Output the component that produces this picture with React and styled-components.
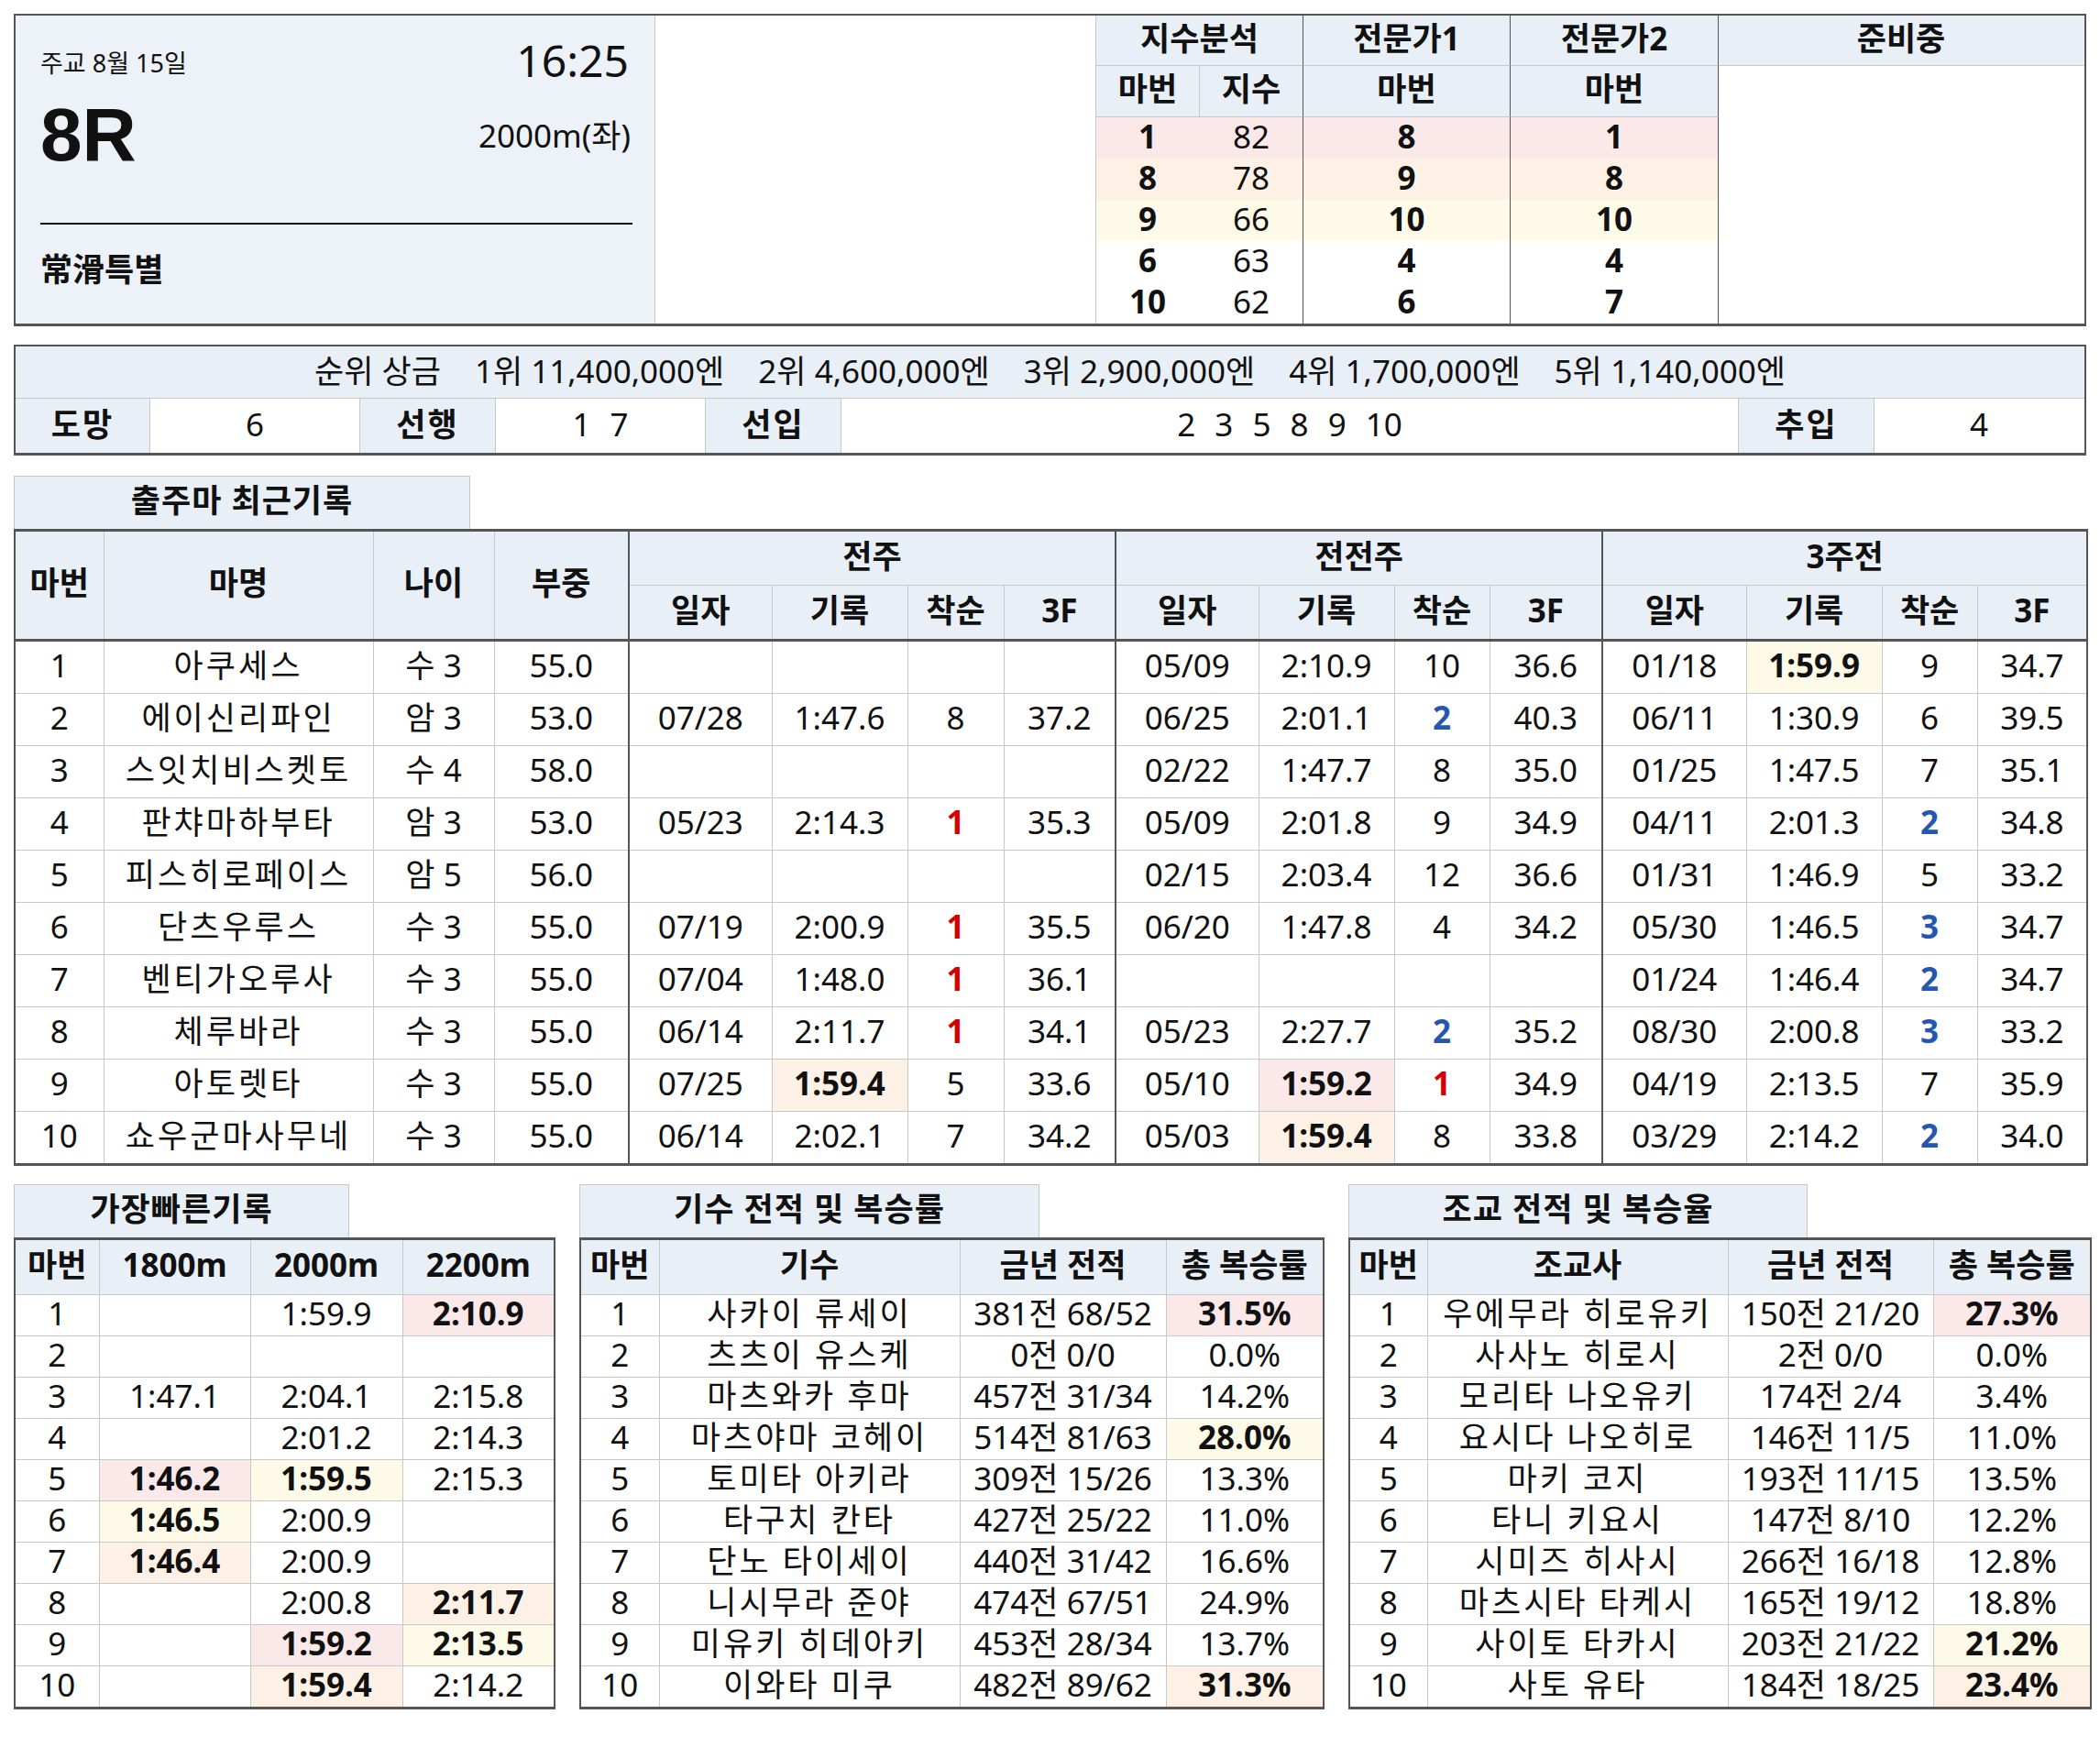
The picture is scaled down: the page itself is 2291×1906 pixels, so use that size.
import React from "react";
import styled, { createGlobalStyle } from "styled-components";

const HEAD = "#e9eff7";
const LINE = "#c8c8c8";
const DARK = "#555555";
const TONES = { 1: "#fbe8e9", 2: "#fdf1e5", 3: "#fefae8" };
const PLACE_COLORS = { 1: "#d40000", 2: "#2458b0", 3: "#2458b0" };

const GlobalStyle = createGlobalStyle`
  body {
    margin: 0;
    background: #fff;
    color: #111;
    font-family: "Noto Sans", "Noto Sans CJK KR", sans-serif;
  }
`;

const Page = styled.div`
  width: 2261px;
  padding: 15px 15px 40px;
  display: flex;
  flex-direction: column;
`;

/* ---------- top summary box ---------- */

const TopBox = styled.div`
  display: grid;
  grid-template-columns: 698px 481px 113px 113px 226px 227px 1fr;
  grid-template-rows: 55px 56px repeat(5, 45px);
  border: 2px solid ${DARK};
  border-bottom-width: 3px;
  font-size: 35px;
`;

const InfoPanel = styled.div`
  grid-column: 1;
  grid-row: 1 / -1;
  background: #edf1f8;
  border-right: 1px solid ${LINE};
  padding: 0 24px 0 27px;
  display: flex;
  flex-direction: column;
`;

const InfoRow = styled.div`
  display: flex;
  justify-content: space-between;
  align-items: center;
  height: ${(p) => p.$h}px;
  margin-top: ${(p) => p.$top}px;
`;

const DateText = styled.span`
  font-size: 27px;
  line-height: 40px;
  margin-top: 12px;
`;

const TimeText = styled.span`
  font-size: 48px;
  line-height: 50px;
  margin: 6px 4px 0 0;
`;

const RaceNo = styled.span`
  font-family: "Liberation Sans", Arial, sans-serif;
  font-size: 82px;
  font-weight: 700;
  line-height: 84px;
`;

const Distance = styled.span`
  font-size: 35px;
  line-height: 40px;
  margin: 2px 2px 0 0;
`;

const Divider = styled.div`
  height: 2px;
  background: #111;
  margin-top: 51px;
`;

const RaceName = styled.div`
  font-size: 35px;
  font-weight: 700;
  line-height: 40px;
  margin-top: 29px;
`;

const BlankArea = styled.div`
  grid-column: 2;
  grid-row: 1 / -1;
  border-right: 1px solid ${LINE};
`;

const PickHead = styled.div`
  grid-column: span ${(p) => p.$span || 1};
  background: ${HEAD};
  font-weight: 700;
  display: flex;
  align-items: center;
  justify-content: center;
  padding-bottom: 6px;
  border-bottom: 1px solid ${LINE};
  border-right: 1px solid ${(p) => (p.$last ? "transparent" : p.$soft ? LINE : DARK)};
  line-height: 1;
`;

const PendingArea = styled.div`
  grid-column: 7;
  grid-row: span 6;
`;

const PickCell = styled.div`
  background: ${(p) => TONES[p.$tone] || "#fff"};
  font-weight: ${(p) => (p.$bold ? 700 : 400)};
  display: flex;
  align-items: center;
  justify-content: center;
  padding-bottom: 5px;
  border-right: 1px solid ${(p) => (p.$edge ? DARK : "transparent")};
  line-height: 1;
`;

/* ---------- prize / style box ---------- */

const PrizeBox = styled.div`
  margin-top: 20px;
  border: 2px solid ${DARK};
  border-bottom-width: 3px;
  font-size: 35px;
`;

const PrizeLine = styled.div`
  height: 57px;
  box-sizing: border-box;
  padding-bottom: 4px;
  background: ${HEAD};
  border-bottom: 1px solid ${LINE};
  display: flex;
  align-items: center;
  justify-content: center;
  gap: 37px;
  line-height: 1;
`;

const StyleRow = styled.div`
  display: grid;
  grid-template-columns: 147px 229px 148px 229px 148px 1fr 148px 229px;
  height: 59px;
`;

const StyleCell = styled.div`
  display: flex;
  align-items: center;
  justify-content: center;
  padding-bottom: 4px;
  background: ${(p) => (p.$label ? HEAD : "#fff")};
  font-weight: ${(p) => (p.$label ? 700 : 400)};
  letter-spacing: ${(p) => (p.$label ? "2px" : "0")};
  border-right: 1px solid ${(p) => (p.$last ? "transparent" : LINE)};
  word-spacing: 12px;
  line-height: 1;
`;

/* ---------- shared section tab ---------- */

const SectionTab = styled.div`
  width: ${(p) => p.$w}px;
  height: 58px;
  box-sizing: border-box;
  padding-bottom: 6px;
  background: ${HEAD};
  border: 1px solid ${LINE};
  border-bottom: none;
  display: flex;
  align-items: center;
  justify-content: center;
  font-size: 35px;
  font-weight: 700;
  letter-spacing: 1px;
  line-height: 1;
`;

const RecordSection = styled.section`
  margin-top: 22px;
  display: flex;
  flex-direction: column;
`;

/* ---------- tables ---------- */

const Table = styled.table`
  width: ${(p) => p.$w}px;
  table-layout: fixed;
  border-collapse: collapse;
  border-top: 3px solid ${DARK};
  border-bottom: 3px solid ${DARK};
  border-left: 2px solid ${DARK};
  border-right: 2px solid ${DARK};
  font-size: 35px;
`;

const Th = styled.th`
  height: ${(p) => p.$h || 52}px;
  padding: 0 0 6px;
  background: ${HEAD};
  font-weight: 700;
  line-height: 1;
  white-space: nowrap;
  border: 1px solid ${LINE};
  border-left: ${(p) => (p.$sep ? `2px solid ${DARK}` : `1px solid ${LINE}`)};
  border-bottom: ${(p) => (p.$base ? `3px solid ${DARK}` : `1px solid ${LINE}`)};
`;

const Td = styled.td`
  height: ${(p) => p.$h || 51}px;
  padding: 0 0 5px;
  text-align: center;
  line-height: 1;
  white-space: nowrap;
  letter-spacing: ${(p) => (p.$wide ? "3px" : "0")};
  background: ${(p) => TONES[p.$tone] || "#fff"};
  font-weight: ${(p) => (p.$tone ? 700 : 400)};
  border: 1px solid ${LINE};
  border-left: ${(p) => (p.$sep ? `2px solid ${DARK}` : `1px solid ${LINE}`)};
`;

const Place = styled.span`
  color: ${(p) => PLACE_COLORS[p.$rank] || "inherit"};
  font-weight: ${(p) => (PLACE_COLORS[p.$rank] ? 700 : 400)};
`;

const BottomRow = styled.div`
  margin-top: 20px;
  display: flex;
  gap: 26px;
`;

const Block = styled.div`
  display: flex;
  flex-direction: column;
`;

/* ---------- data ---------- */

const picks = [
  { tone: 1, idx: [1, 82], e1: 8, e2: 1 },
  { tone: 2, idx: [8, 78], e1: 9, e2: 8 },
  { tone: 3, idx: [9, 66], e1: 10, e2: 10 },
  { idx: [6, 63], e1: 4, e2: 4 },
  { idx: [10, 62], e1: 6, e2: 7 },
];

const prizes = [
  "순위 상금",
  "1위 11,400,000엔",
  "2위 4,600,000엔",
  "3위 2,900,000엔",
  "4위 1,700,000엔",
  "5위 1,140,000엔",
];

// [일자, 기록, 착순, 3F, 기록 강조]
const horses = [
  { no: 1, name: "아쿠세스", age: "수 3", wt: "55.0", runs: [null, ["05/09", "2:10.9", 10, "36.6"], ["01/18", "1:59.9", 9, "34.7", 3]] },
  { no: 2, name: "에이신리파인", age: "암 3", wt: "53.0", runs: [["07/28", "1:47.6", 8, "37.2"], ["06/25", "2:01.1", 2, "40.3"], ["06/11", "1:30.9", 6, "39.5"]] },
  { no: 3, name: "스잇치비스켓토", age: "수 4", wt: "58.0", runs: [null, ["02/22", "1:47.7", 8, "35.0"], ["01/25", "1:47.5", 7, "35.1"]] },
  { no: 4, name: "판챠마하부타", age: "암 3", wt: "53.0", runs: [["05/23", "2:14.3", 1, "35.3"], ["05/09", "2:01.8", 9, "34.9"], ["04/11", "2:01.3", 2, "34.8"]] },
  { no: 5, name: "피스히로페이스", age: "암 5", wt: "56.0", runs: [null, ["02/15", "2:03.4", 12, "36.6"], ["01/31", "1:46.9", 5, "33.2"]] },
  { no: 6, name: "단츠우루스", age: "수 3", wt: "55.0", runs: [["07/19", "2:00.9", 1, "35.5"], ["06/20", "1:47.8", 4, "34.2"], ["05/30", "1:46.5", 3, "34.7"]] },
  { no: 7, name: "벤티가오루사", age: "수 3", wt: "55.0", runs: [["07/04", "1:48.0", 1, "36.1"], null, ["01/24", "1:46.4", 2, "34.7"]] },
  { no: 8, name: "체루바라", age: "수 3", wt: "55.0", runs: [["06/14", "2:11.7", 1, "34.1"], ["05/23", "2:27.7", 2, "35.2"], ["08/30", "2:00.8", 3, "33.2"]] },
  { no: 9, name: "아토렛타", age: "수 3", wt: "55.0", runs: [["07/25", "1:59.4", 5, "33.6", 2], ["05/10", "1:59.2", 1, "34.9", 1], ["04/19", "2:13.5", 7, "35.9"]] },
  { no: 10, name: "쇼우군마사무네", age: "수 3", wt: "55.0", runs: [["06/14", "2:02.1", 7, "34.2"], ["05/03", "1:59.4", 8, "33.8", 2], ["03/29", "2:14.2", 2, "34.0"]] },
];

// [값, 강조]
const fastest = [
  [null, ["1:59.9"], ["2:10.9", 1]],
  [null, null, null],
  [["1:47.1"], ["2:04.1"], ["2:15.8"]],
  [null, ["2:01.2"], ["2:14.3"]],
  [["1:46.2", 1], ["1:59.5", 3], ["2:15.3"]],
  [["1:46.5", 3], ["2:00.9"], null],
  [["1:46.4", 2], ["2:00.9"], null],
  [null, ["2:00.8"], ["2:11.7", 2]],
  [null, ["1:59.2", 1], ["2:13.5", 3]],
  [null, ["1:59.4", 2], ["2:14.2"]],
];

const jockeys = [
  ["사카이 류세이", "381전 68/52", "31.5%", 1],
  ["츠츠이 유스케", "0전 0/0", "0.0%"],
  ["마츠와카 후마", "457전 31/34", "14.2%"],
  ["마츠야마 코헤이", "514전 81/63", "28.0%", 3],
  ["토미타 아키라", "309전 15/26", "13.3%"],
  ["타구치 칸타", "427전 25/22", "11.0%"],
  ["단노 타이세이", "440전 31/42", "16.6%"],
  ["니시무라 준야", "474전 67/51", "24.9%"],
  ["미유키 히데아키", "453전 28/34", "13.7%"],
  ["이와타 미쿠", "482전 89/62", "31.3%", 2],
];

const trainers = [
  ["우에무라 히로유키", "150전 21/20", "27.3%", 1],
  ["사사노 히로시", "2전 0/0", "0.0%"],
  ["모리타 나오유키", "174전 2/4", "3.4%"],
  ["요시다 나오히로", "146전 11/5", "11.0%"],
  ["마키 코지", "193전 11/15", "13.5%"],
  ["타니 키요시", "147전 8/10", "12.2%"],
  ["시미즈 히사시", "266전 16/18", "12.8%"],
  ["마츠시타 타케시", "165전 19/12", "18.8%"],
  ["사이토 타카시", "203전 21/22", "21.2%", 3],
  ["사토 유타", "184전 18/25", "23.4%", 2],
];

/* ---------- parts ---------- */

function SummaryBox() {
  return (
    <TopBox>
      <InfoPanel>
        <InfoRow $h={50} $top={21}>
          <DateText>주교 8월 15일</DateText>
          <TimeText>16:25</TimeText>
        </InfoRow>
        <InfoRow $h={90} $top={14}>
          <RaceNo>8R</RaceNo>
          <Distance>2000m(좌)</Distance>
        </InfoRow>
        <Divider />
        <RaceName>常滑특별</RaceName>
      </InfoPanel>
      <BlankArea />
      <PickHead $span={2}>지수분석</PickHead>
      <PickHead>전문가1</PickHead>
      <PickHead>전문가2</PickHead>
      <PickHead $last>준비중</PickHead>
      <PickHead $soft>마번</PickHead>
      <PickHead>지수</PickHead>
      <PickHead>마번</PickHead>
      <PickHead>마번</PickHead>
      <PendingArea />
      {picks.map((r, i) => (
        <React.Fragment key={i}>
          <PickCell $tone={r.tone} $bold>{r.idx[0]}</PickCell>
          <PickCell $tone={r.tone} $edge>{r.idx[1]}</PickCell>
          <PickCell $tone={r.tone} $bold $edge>{r.e1}</PickCell>
          <PickCell $tone={r.tone} $bold $edge>{r.e2}</PickCell>
        </React.Fragment>
      ))}
    </TopBox>
  );
}

function PrizePanel() {
  return (
    <PrizeBox>
      <PrizeLine>
        {prizes.map((p) => (
          <span key={p}>{p}</span>
        ))}
      </PrizeLine>
      <StyleRow>
        <StyleCell $label>도망</StyleCell>
        <StyleCell>6</StyleCell>
        <StyleCell $label>선행</StyleCell>
        <StyleCell>1 7</StyleCell>
        <StyleCell $label>선입</StyleCell>
        <StyleCell>2 3 5 8 9 10</StyleCell>
        <StyleCell $label>추입</StyleCell>
        <StyleCell $last>4</StyleCell>
      </StyleRow>
    </PrizeBox>
  );
}

const recordCols = [97, 294, 132, 147, 156, 148, 105, 122, 156, 148, 104, 123, 157, 148, 104, 120];

function RecordTable() {
  return (
    <RecordSection>
      <SectionTab $w={498}>출주마 최근기록</SectionTab>
      <Table $w={2261}>
        <colgroup>
          {recordCols.map((w, i) => (
            <col key={i} style={{ width: w }} />
          ))}
        </colgroup>
        <thead>
          <tr>
            <Th rowSpan={2} $base>마번</Th>
            <Th rowSpan={2} $base>마명</Th>
            <Th rowSpan={2} $base>나이</Th>
            <Th rowSpan={2} $base>부중</Th>
            <Th colSpan={4} $sep>전주</Th>
            <Th colSpan={4} $sep>전전주</Th>
            <Th colSpan={4} $sep>3주전</Th>
          </tr>
          <tr>
            {[0, 1, 2].map((g) => (
              <React.Fragment key={g}>
                <Th $sep $base>일자</Th>
                <Th $base>기록</Th>
                <Th $base>착순</Th>
                <Th $base>3F</Th>
              </React.Fragment>
            ))}
          </tr>
        </thead>
        <tbody>
          {horses.map((h) => (
            <tr key={h.no}>
              <Td>{h.no}</Td>
              <Td $wide>{h.name}</Td>
              <Td>{h.age}</Td>
              <Td>{h.wt}</Td>
              {h.runs.map((r, g) => {
                const run = r || ["", "", "", ""];
                return (
                  <React.Fragment key={g}>
                    <Td $sep>{run[0]}</Td>
                    <Td $tone={run[4]}>{run[1]}</Td>
                    <Td>
                      <Place $rank={run[2]}>{run[2]}</Place>
                    </Td>
                    <Td>{run[3]}</Td>
                  </React.Fragment>
                );
              })}
            </tr>
          ))}
        </tbody>
      </Table>
    </RecordSection>
  );
}

function FastestTable() {
  return (
    <Block>
      <SectionTab $w={366}>가장빠른기록</SectionTab>
      <Table $w={589}>
        <colgroup>
          {[92, 165, 166, 166].map((w, i) => (
            <col key={i} style={{ width: w }} />
          ))}
        </colgroup>
        <thead>
          <tr>
            <Th $h={53}>마번</Th>
            <Th $h={53}>1800m</Th>
            <Th $h={53}>2000m</Th>
            <Th $h={53}>2200m</Th>
          </tr>
        </thead>
        <tbody>
          {fastest.map((row, i) => (
            <tr key={i}>
              <Td $h={39}>{i + 1}</Td>
              {row.map((c, j) => (
                <Td key={j} $h={39} $tone={c && c[1]}>
                  {c ? c[0] : ""}
                </Td>
              ))}
            </tr>
          ))}
        </tbody>
      </Table>
    </Block>
  );
}

function RateTable({ title, tabWidth, width, cols, who, rows }) {
  return (
    <Block>
      <SectionTab $w={tabWidth}>{title}</SectionTab>
      <Table $w={width}>
        <colgroup>
          {cols.map((w, i) => (
            <col key={i} style={{ width: w }} />
          ))}
        </colgroup>
        <thead>
          <tr>
            <Th $h={53}>마번</Th>
            <Th $h={53}>{who}</Th>
            <Th $h={53}>금년 전적</Th>
            <Th $h={53}>총 복승률</Th>
          </tr>
        </thead>
        <tbody>
          {rows.map((r, i) => (
            <tr key={i}>
              <Td $h={39}>{i + 1}</Td>
              <Td $h={39} $wide>{r[0]}</Td>
              <Td $h={39}>{r[1]}</Td>
              <Td $h={39} $tone={r[3]}>{r[2]}</Td>
            </tr>
          ))}
        </tbody>
      </Table>
    </Block>
  );
}

export default function App() {
  return (
    <>
      <GlobalStyle />
      <Page>
        <SummaryBox />
        <PrizePanel />
        <RecordTable />
        <BottomRow>
          <FastestTable />
          <RateTable
            title="기수 전적 및 복승률"
            tabWidth={502}
            width={811}
            cols={[86, 328, 225, 172]}
            who="기수"
            rows={jockeys}
          />
          <RateTable
            title="조교 전적 및 복승율"
            tabWidth={501}
            width={809}
            cols={[85, 328, 224, 172]}
            who="조교사"
            rows={trainers}
          />
        </BottomRow>
      </Page>
    </>
  );
}
